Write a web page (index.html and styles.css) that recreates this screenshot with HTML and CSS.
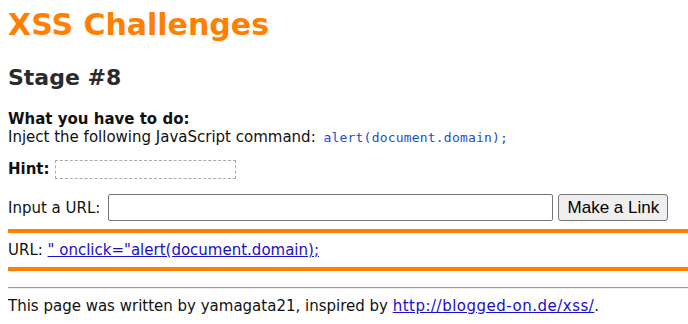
FILE: index.html
```html
<!DOCTYPE html>
<html>
  <head>
    <link rel="stylesheet" href="styles.css">
  </head>
  <body>
    <h1 class="title">XSS Challenges</h1>
    <h2 class="stage">Stage #8</h2>

    <div class="task">
      <b>What you have to do:</b><br>
      Inject the following JavaScript command: <span class="cmd">alert(document.domain);</span>
    </div>

    <div class="hint">
      <b>Hint:</b> <span class="hint-box"></span>
    </div>

    <form class="url-form" onsubmit="return false;">
      <label for="url">Input a URL:</label>
      <input type="text" id="url" class="url-input" />
      <button type="submit" class="url-btn">Make a Link</button>
    </form>

    <div class="bar"></div>
    <div class="result">
      URL: <a href="#">" onclick="alert(document.domain);</a>
    </div>
    <div class="bar"></div>

    <hr class="rule" />
    <div class="footer">
      This page was written by yamagata21, inspired by <a href="#">http://blogged-on.de/xss/</a>.
    </div>
  </body>
</html>
```

FILE: styles.css
```css
/* CSS styles */
body {
  font-family: "DejaVu Sans", Verdana, sans-serif;
  font-size: 15px;
  color: #111;
  background-color: #fff;
  margin: 8px 0 0 8px;
}

.title {
  color: #ff8000;
  font-size: 30px;
  margin: 0;
  line-height: 34px;
}

.stage {
  color: #2b2b2b;
  font-size: 22px;
  margin: 22px 0 0;
  line-height: 28px;
}

.task {
  margin-top: 18px;
  line-height: 18px;
}

.cmd {
  font-family: "DejaVu Sans Mono", monospace;
  font-size: 13px;
  letter-spacing: 0.2px;
  color: #1a4fc4;
  margin-left: 3px;
}

.hint {
  margin-top: 12px;
  line-height: 20px;
  display: flex;
  align-items: center;
  gap: 5px;
}

.hint-box {
  display: inline-block;
  width: 179px;
  height: 17px;
  border: 1px dashed #aaa;
}

.url-form {
  display: flex;
  align-items: center;
  margin-top: 15px;
  gap: 5px;
}

.url-input {
  width: 439px;
  height: 23px;
  padding: 1px 2px;
  border: 1px solid #767676;
  border-radius: 2px;
  margin: 0 0 0 3px;
  font-size: 15px;
}

.url-btn {
  font-family: "Liberation Sans", Arial, sans-serif;
  font-size: 17px;
  padding: 2px 8px;
  width: 110px;
  height: 27px;
  background-color: #efefef;
  border: 1px solid #767676;
  border-radius: 3px;
  color: #000;
}

.bar {
  height: 3px;
  background-color: #ff8000;
  border-top: 1px solid #999;
}

.url-form + .bar {
  margin-top: 8px;
}

.result {
  padding: 8px 0;
  line-height: 18px;
}

.result a,
.footer a {
  color: #1a0dcc;
}

.footer a {
  letter-spacing: 0.5px;
}

.rule {
  margin: 16px 0 0;
  border: 0;
  border-top: 1px solid #9a9a9a;
  border-bottom: 1px solid #eee;
}

.footer {
  margin-top: 8px;
  line-height: 18px;
}
```
